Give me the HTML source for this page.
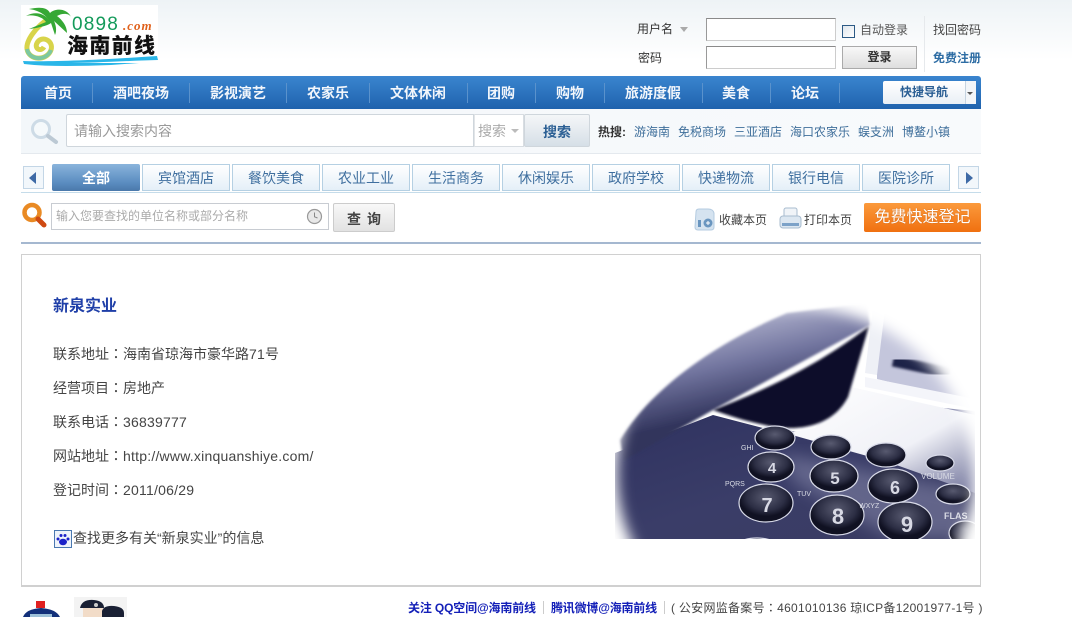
<!DOCTYPE html>
<html lang="zh"><head><meta charset="utf-8"><title>新泉实业</title>
<style>
html,body{margin:0;padding:0;background:#fff}
body{width:1072px;height:617px;overflow:hidden;position:relative;font-family:"Liberation Sans","Noto Sans CJK SC",sans-serif;font-size:12px;color:#333}
.a{position:absolute;white-space:nowrap}
.top{left:0;top:0;width:1072px;height:60px;background:linear-gradient(#eef3f6,#fff)}
.nav{left:21px;top:76px;width:960px;height:33px;border-radius:3px 3px 0 0;background:linear-gradient(#3a85cf,#1f62ad)}
.n{top:84px;color:#f2f6fb;font-size:14px;font-weight:bold;line-height:18px;transform:translateX(-50%)}
.s{top:83px;width:1px;height:20px;background:#5a92cc}
.inp{background:#fff;border:1px solid #ccc;border-top-color:#8a8a8a;border-left-color:#999;box-sizing:border-box}
.tab{top:164px;width:88px;height:27px;box-sizing:border-box;border:1px solid #b5d0e3;background:linear-gradient(#fff,#e4eff8);color:#3f6f9f;font-size:14px;line-height:26px;text-align:center}
.hot{top:124px;color:#3f6f9b;font-size:12px;line-height:16px}
.c{left:53px;font-size:14px;line-height:18px;color:#444}
b.q{font-weight:normal;font-family:"Noto Sans CJK TC",sans-serif}
.c i{font-style:normal;letter-spacing:.22px}
</style></head><body>
<div class="a top"></div>

<svg class="a" style="left:21px;top:5px" width="138" height="62" viewBox="0 0 138 62">
<rect width="137" height="62" fill="#fff"/>
<path d="M2 56C30 57 80 55 136 51L137 55C100 56 70 58 50 58C70 58 100 58 118 58L90 60C60 61 30 62 3 59Z" fill="#2ab6e8"/>
<path d="M30 12C14 22 5 36 6 44C8 56 26 56 30 45C33 35 20 30 16 38C13 44 20 47 23 42" fill="none" stroke="#d8d44a" stroke-width="5"/>
<path d="M6 44C8 56 26 56 30 45" fill="none" stroke="#7cc8a0" stroke-width="4"/>
<path d="M28 16C24 8 14 6 5 11C12 9 22 12 25 17L8 24C16 23 26 21 30 18L34 30C36 26 35 20 33 16L46 28C46 20 40 14 36 11C41 8 48 8 50 12C46 3 34 3 29 8C26 2 18 2 8 4C15 5 24 8 28 16Z" fill="#36a835"/>
<text x="51" y="25" font-family="Liberation Sans,sans-serif" font-size="19" fill="#139a5a" letter-spacing="1.2">0898</text>
<text x="102" y="25" font-family="Liberation Serif,serif" font-size="13" font-weight="bold" font-style="italic" fill="#e0601a" letter-spacing="1">.com</text>
<text x="46" y="48" font-family="Noto Sans CJK SC,sans-serif" font-size="21" font-weight="900" fill="#111" textLength="88">海南前线</text>
</svg>

<div class="a" style="left:637px;top:21px;line-height:16px">用户名</div>
<div class="a" style="left:680px;top:27px;border:4px solid transparent;border-top:5px solid #aaa;border-bottom:0"></div>
<div class="a" style="left:638px;top:50px;line-height:16px">密码</div>
<div class="a inp" style="left:706px;top:18px;width:130px;height:23px"></div>
<div class="a inp" style="left:706px;top:46px;width:130px;height:23px"></div>
<div class="a" style="left:842px;top:25px;width:13px;height:13px;box-sizing:border-box;border:1px solid #2c5a85;background:linear-gradient(135deg,#dfe6ec,#fff)"></div>
<div class="a" style="left:860px;top:22px;line-height:16px;color:#555">自动登录</div>
<div class="a" style="left:842px;top:46px;width:75px;height:23px;box-sizing:border-box;border:1px solid #aaa;background:linear-gradient(#f8f8f8,#dedede);text-align:center;line-height:21px;color:#333;font-weight:bold">登录</div>
<div class="a" style="left:924px;top:16px;width:1px;height:56px;background:#e6e9ec"></div>
<div class="a" style="left:933px;top:22px;line-height:16px;color:#444">找回密码</div>
<div class="a" style="left:933px;top:50px;line-height:16px;color:#2e6da4;font-weight:bold">免费注册</div>

<div class="a nav"></div>
<div class="a n" style="left:58px">首页</div><div class="a s" style="left:92px"></div>
<div class="a n" style="left:141px">酒吧夜场</div><div class="a s" style="left:189px"></div>
<div class="a n" style="left:238px">影视演艺</div><div class="a s" style="left:286px"></div>
<div class="a n" style="left:328px">农家乐</div><div class="a s" style="left:369px"></div>
<div class="a n" style="left:418px">文体休闲</div><div class="a s" style="left:467px"></div>
<div class="a n" style="left:501px">团购</div><div class="a s" style="left:535px"></div>
<div class="a n" style="left:570px">购物</div><div class="a s" style="left:604px"></div>
<div class="a n" style="left:653px">旅游度假</div><div class="a s" style="left:702px"></div>
<div class="a n" style="left:736px">美食</div><div class="a s" style="left:770px"></div>
<div class="a n" style="left:805px">论坛</div><div class="a s" style="left:839px"></div>
<div class="a" style="left:883px;top:81px;width:82px;height:23px;background:linear-gradient(#fff,#e9eff5);border-radius:2px 0 0 2px;text-align:center;line-height:23px;color:#2b5f94;font-weight:bold">快捷导航</div>
<div class="a" style="left:965px;top:81px;width:11px;height:23px;background:#f2f5f8;border-left:1px solid #c5d3e0;box-sizing:border-box"></div>
<div class="a" style="left:967px;top:92px;border:3px solid transparent;border-top:3px solid #555;border-bottom:0"></div>

<div class="a" style="left:21px;top:109px;width:960px;height:45px;box-sizing:border-box;background:linear-gradient(90deg,#f3f7fa,#f8fafc);border-bottom:1px solid #e4e9ee"></div>
<svg class="a" style="left:28px;top:118px" width="32" height="28" viewBox="0 0 32 28"><circle cx="13" cy="11" r="8.5" fill="#f5f9fb" stroke="#cddbe6" stroke-width="3"/><path d="M20 18L28 24" stroke="#bcc9d4" stroke-width="4" stroke-linecap="round"/></svg>
<div class="a" style="left:66px;top:114px;width:408px;height:33px;box-sizing:border-box;border:1px solid #cfd6dc;border-radius:2px 0 0 2px;background:#fff;line-height:33px;padding-left:7px;font-size:14px;color:#999">请输入搜索内容</div>
<div class="a" style="left:474px;top:114px;width:50px;height:33px;box-sizing:border-box;border:1px solid #d8dde2;border-left:1px solid #e2e5e8;background:#fff;line-height:33px;padding-left:3px;font-size:14px;color:#aaa">搜索</div>
<div class="a" style="left:511px;top:129px;border:4px solid transparent;border-top:4px solid #bbb;border-bottom:0"></div>
<div class="a" style="left:524px;top:114px;width:66px;height:33px;box-sizing:border-box;border:1px solid #cfd6dc;border-radius:2px;background:linear-gradient(#f4f6f8,#d6dfe7);text-align:center;line-height:35px;font-size:14px;font-weight:bold;color:#2b5f94">搜索</div>
<div class="a" style="left:598px;top:124px;line-height:16px;font-weight:bold;color:#333">热搜:</div>
<div class="a hot" style="left:634px">游海南</div>
<div class="a hot" style="left:678px">免税商场</div>
<div class="a hot" style="left:734px">三亚酒店</div>
<div class="a hot" style="left:790px">海口农家乐</div>
<div class="a hot" style="left:858px">蜈支洲</div>
<div class="a hot" style="left:902px">博鳌小镇</div>

<div class="a" style="left:21px;top:192px;width:960px;height:1px;background:#c5dcea"></div>
<div class="a" style="left:23px;top:166px;width:21px;height:23px;box-sizing:border-box;border:1px solid #c3d6e6;background:#f2f7fb"></div>
<div class="a" style="left:29px;top:172px;border:6px solid transparent;border-right:7px solid #3e6aa6;border-left:0"></div>
<div class="a" style="left:52px;top:164px;width:88px;height:27px;border-radius:2px;background:linear-gradient(#8ab4dc,#5a8cc0 70%,#4a78aa);color:#fff;font-weight:bold;font-size:14px;line-height:28px;text-align:center">全部</div>
<div class="a tab" style="left:142px">宾馆酒店</div>
<div class="a tab" style="left:232px">餐饮美食</div>
<div class="a tab" style="left:322px">农业工业</div>
<div class="a tab" style="left:412px">生活商务</div>
<div class="a tab" style="left:502px">休闲娱乐</div>
<div class="a tab" style="left:592px">政府学校</div>
<div class="a tab" style="left:682px">快递物流</div>
<div class="a tab" style="left:772px">银行电信</div>
<div class="a tab" style="left:862px">医院诊所</div>
<div class="a" style="left:958px;top:166px;width:21px;height:23px;box-sizing:border-box;border:1px solid #c3d6e6;background:#f2f7fb"></div>
<div class="a" style="left:966px;top:172px;border:6px solid transparent;border-left:7px solid #3e6aa6;border-right:0"></div>

<svg class="a" style="left:20px;top:202px" width="28" height="28" viewBox="0 0 28 28"><circle cx="12" cy="10.5" r="7.5" fill="#fff" stroke="#e98a24" stroke-width="4.5"/><path d="M18 17L24 23" stroke="#cf4a12" stroke-width="5" stroke-linecap="round"/></svg>
<div class="a" style="left:51px;top:203px;width:278px;height:27px;box-sizing:border-box;border:1px solid #c8ccd2;background:#fff;line-height:25px;padding-left:4px;font-size:12px;color:#aaa">输入您要查找的单位名称或部分名称</div>
<svg class="a" style="left:306px;top:208px" width="17" height="17" viewBox="0 0 17 17"><circle cx="8.5" cy="8.5" r="7" fill="#e8e8e8" stroke="#999" stroke-width="1.2"/><path d="M8.5 4.5V8.8L11.5 10" fill="none" stroke="#888"/></svg>
<div class="a" style="left:333px;top:203px;width:62px;height:29px;box-sizing:border-box;border:1px solid #ccc;border-radius:2px;background:linear-gradient(#f8f8f8,#e2e2e2);text-align:center;line-height:31px;font-size:14px;font-weight:bold;color:#444;letter-spacing:6px;padding-left:6px">查询</div>
<svg class="a" style="left:694px;top:207px" width="22" height="24" viewBox="0 0 22 24"><path d="M2 5Q2 2 5 2H14Q19 2 20 6V20Q20 23 17 23H4Q1 23 1 20Z" fill="#d5e3f0" stroke="#b4cbe0"/><rect x="4" y="13" width="3" height="7" fill="#6a96c0"/><circle cx="14" cy="16" r="4.5" fill="#6a96c0"/><path d="M12 16H16M14 14V18" stroke="#fff"/></svg>
<div class="a" style="left:719px;top:212px;line-height:16px;color:#444">收藏本页</div>
<svg class="a" style="left:779px;top:206px" width="23" height="24" viewBox="0 0 23 24"><rect x="5" y="2" width="13" height="10" rx="2" fill="#f0f4f8" stroke="#a8bccf"/><rect x="1" y="10" width="21" height="12" rx="3" fill="#dce7f1" stroke="#a8bccf"/><rect x="3" y="17" width="17" height="3" fill="#7ca2c8"/></svg>
<div class="a" style="left:804px;top:212px;line-height:16px;color:#444">打印本页</div>
<div class="a" style="left:864px;top:203px;width:117px;height:29px;border-radius:2px;background:linear-gradient(#fb9a3c,#f07010);color:#fff;font-size:16px;line-height:29px;text-align:center;text-shadow:0 0 1px #b85a10">免费快速登记</div>
<div class="a" style="left:21px;top:242px;width:960px;height:2px;background:#a5b8d0"></div>

<div class="a" style="left:21px;top:254px;width:960px;height:333px;box-sizing:border-box;border:1px solid #d0d0d0;border-bottom:2px solid #d0d0d0"></div>
<div class="a" style="left:53px;top:296px;font-size:16px;line-height:22px;font-weight:bold;color:#1f3fa8">新泉实业</div>
<div class="a c" style="top:345px">联系地址<b class="q" lang="zh-TW">：</b>海南省琼海市豪华路<i>71</i>号</div>
<div class="a c" style="top:379px">经营项目<b class="q" lang="zh-TW">：</b>房地产</div>
<div class="a c" style="top:413px">联系电话<b class="q" lang="zh-TW">：</b><i>36839777</i></div>
<div class="a c" style="top:447px">网站地址<b class="q" lang="zh-TW">：</b><i>http://www.xinquanshiye.com/</i></div>
<div class="a c" style="top:481px">登记时间<b class="q" lang="zh-TW">：</b><i>2011/06/29</i></div>
<svg class="a" style="left:54px;top:530px" width="18" height="18" viewBox="0 0 18 18"><rect x=".5" y=".5" width="17" height="17" fill="#eef3fa" stroke="#4a78b0"/><ellipse cx="9" cy="12" rx="4" ry="3.2" fill="#1c22c8"/><circle cx="4" cy="9" r="1.5" fill="#1c22c8"/><circle cx="7" cy="5.5" r="1.5" fill="#1c22c8"/><circle cx="11" cy="5.5" r="1.5" fill="#1c22c8"/><circle cx="14" cy="9" r="1.5" fill="#1c22c8"/></svg>
<div class="a" style="left:73px;top:529px;font-size:14px;line-height:18px;color:#444">查找更多有关“新泉实业”的信息</div>

<svg class="a" style="left:615px;top:303px" width="360" height="236" viewBox="0 0 360 236">
<defs>
<mask id="mk" maskUnits="userSpaceOnUse" x="0" y="0" width="360" height="236"><rect width="360" height="236" fill="#000"/><ellipse cx="180" cy="172" rx="178" ry="168" fill="#fff" filter="url(#bl8)"/></mask>
<filter id="bl8" x="-20%" y="-20%" width="140%" height="140%"><feGaussianBlur stdDeviation="7"/></filter>
<linearGradient id="b" x1="0" y1="0" x2="1" y2="1"><stop offset="0" stop-color="#2f3260"/><stop offset=".5" stop-color="#3a3d68"/><stop offset="1" stop-color="#3a3c62"/></linearGradient>
<linearGradient id="w" x1="0" y1="0" x2="1" y2="1"><stop offset="0" stop-color="#fff"/><stop offset=".6" stop-color="#f0f1f7"/><stop offset="1" stop-color="#6d7098"/></linearGradient>
<linearGradient id="h" x1=".35" y1=".1" x2=".6" y2=".8"><stop offset="0" stop-color="#b4b6d0"/><stop offset=".4" stop-color="#72759f"/><stop offset=".8" stop-color="#31345c"/></linearGradient>
<radialGradient id="k" cx=".5" cy=".35"><stop offset="0" stop-color="#585a70"/><stop offset=".7" stop-color="#2c2e44"/><stop offset="1" stop-color="#101122"/></radialGradient>
<filter id="bl"><feGaussianBlur stdDeviation="1.2"/></filter>
<filter id="bl3"><feGaussianBlur stdDeviation="8"/></filter>
</defs>
<g mask="url(#mk)">
<rect width="360" height="236" fill="#fff"/>
<path d="M262 8L360 30V100L262 76Z" fill="#c4c6dc"/>
<path d="M258 4L270 6L262 72L250 70Z" fill="#eef0f6"/>
<path d="M278 58L335 70" stroke="#1e2146" stroke-width="11" filter="url(#bl)"/>
<path d="M250 74L360 96V106L250 84Z" fill="#f4f5fa"/>
<path d="M318 104L360 108V150L340 135Z" fill="#7477a0"/>
<path d="M0 236V150L98 112L152 126L200 130L360 170V236Z" fill="url(#b)"/>
<path d="M236 84L360 112V190L270 158L170 130L200 125Z" fill="url(#w)"/>
<path d="M165 150L340 185L360 236H280L180 180Z" fill="#8b8daf" opacity=".5" filter="url(#bl3)"/>
<path d="M5 137C30 95 85 47 172 10L252 0L255 22L98 107L8 158Z" fill="url(#h)" filter="url(#bl)"/>
<path d="M254 23L233 94C215 128 175 128 150 122C130 118 112 112 98 107C170 80 220 50 254 23Z" fill="#0a0a2b" filter="url(#bl)"/>
<g fill="url(#k)" stroke="#d8dae8" stroke-width="1.2">
<ellipse cx="160" cy="135" rx="20" ry="12"/><ellipse cx="216" cy="144" rx="20" ry="12"/><ellipse cx="271" cy="152" rx="20" ry="12"/>
<ellipse cx="156" cy="164" rx="23" ry="15"/><ellipse cx="219" cy="173" rx="24" ry="16"/><ellipse cx="278" cy="183" rx="25" ry="17"/>
<ellipse cx="151" cy="200" rx="27" ry="19"/><ellipse cx="222" cy="212" rx="27" ry="20"/><ellipse cx="290" cy="219" rx="27" ry="20"/>
<ellipse cx="325" cy="160" rx="14" ry="8"/><ellipse cx="338" cy="191" rx="17" ry="10"/><ellipse cx="350" cy="230" rx="16" ry="12"/><ellipse cx="142" cy="247" rx="24" ry="12"/>
</g>
<g font-family="Liberation Sans,sans-serif" fill="#d8d9e4" text-anchor="middle" font-weight="bold">
<text x="157" y="170" font-size="15">4</text><text x="220" y="181" font-size="17">5</text><text x="280" y="191" font-size="18">6</text><text x="152" y="209" font-size="20">7</text><text x="223" y="221" font-size="22">8</text><text x="292" y="229" font-size="22">9</text>
</g>
<g font-family="Liberation Sans,sans-serif" fill="#d8dae4" font-size="7"><text x="126" y="147">GHI</text><text x="110" y="183">PQRS</text><text x="182" y="193">TUV</text><text x="244" y="205">WXYZ</text><text x="306" y="176" font-size="8">VOLUME</text><text x="329" y="216" font-size="9" font-weight="bold">FLAS</text></g>
</g>
</svg>

<div class="a" style="left:408px;top:600px;line-height:16px;font-weight:bold;color:#1420b8;letter-spacing:-.15px">关注 QQ空间@海南前线</div>
<div class="a" style="left:543px;top:601px;width:1px;height:13px;background:#ccc"></div>
<div class="a" style="left:551px;top:600px;line-height:16px;font-weight:bold;color:#1420b8;letter-spacing:-.2px">腾讯微博@海南前线</div>
<div class="a" style="left:664px;top:601px;width:1px;height:13px;background:#ccc"></div>
<div class="a" style="left:671px;top:600px;line-height:16px;color:#444;letter-spacing:.28px">( 公安网监备案号<b class="q" lang="zh-TW">：</b>4601010136 琼ICP备12001977-1号 )</div>

<svg class="a" style="left:22px;top:600px" width="40" height="17" viewBox="0 0 40 17"><rect x="14" y="1" width="9" height="7" fill="#e02020"/><path d="M1 17Q4 9 19 8Q34 9 38 17Z" fill="#12307a"/><rect x="8" y="14" width="22" height="3" fill="#9cc0d8"/></svg>
<svg class="a" style="left:74px;top:597px" width="54" height="20" viewBox="0 0 54 20"><rect width="53" height="20" fill="#f3f3f3"/><path d="M6 11Q8 2 20 3Q30 4 30 11Z" fill="#1a2034"/><circle cx="22" cy="8" r="2" fill="#ccc"/><rect x="9" y="11" width="20" height="9" fill="#f2dcc8"/><path d="M28 14Q30 8 40 9Q50 10 50 16V20H28Z" fill="#1a2034"/></svg>
</body></html>
